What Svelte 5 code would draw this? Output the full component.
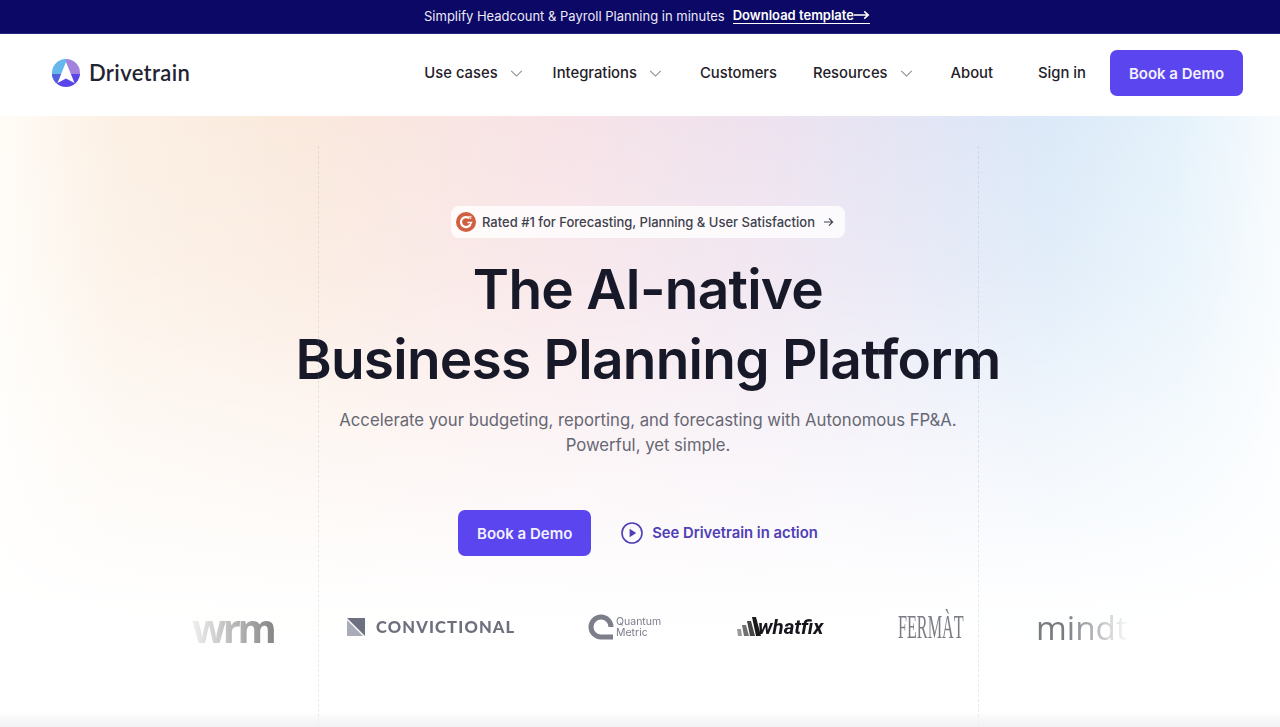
<script lang="ts">
  const navItems = [
    { label: 'Use cases', caret: true },
    { label: 'Integrations', caret: true },
    { label: 'Customers', caret: false },
    { label: 'Resources', caret: true },
    { label: 'About', caret: false }
  ];
</script>

<div class="page">
  <div class="announce">
    <span>Simplify Headcount &amp; Payroll Planning in minutes</span>
    <a href="#template">Download template<svg class="long-arrow" viewBox="0 0 18 10" aria-hidden="true"><path d="M0 5h16M11.5 1l4.5 4-4.5 4"/></svg></a>
  </div>

  <header class="nav">
    <a class="brand" href="#home">
      <svg class="mark" viewBox="0 0 28 28" aria-hidden="true">
        <defs>
          <clipPath id="disc"><circle cx="14" cy="14" r="14"/></clipPath>
        </defs>
        <g clip-path="url(#disc)">
          <rect width="14" height="17" fill="#66b8ec"/>
          <rect x="14" width="14" height="17" fill="#a183dd"/>
          <rect y="15" width="28" height="13" fill="#5a45e8"/>
          <path d="M0 15 9 15 5 24 0 24Z" fill="#4f62dc"/>
        </g>
        <path d="M14 3 22.5 24 14 19.5 5.5 24Z" fill="#fff"/>
      </svg>
      <span>Drivetrain</span>
    </a>
    <nav>
      {#each navItems as item}
        <a class="nav-link" href="#nav">
          {item.label}
          {#if item.caret}
            <svg class="caret" viewBox="0 0 14 8" aria-hidden="true"><path d="M1 1l6 6 6-6"/></svg>
          {/if}
        </a>
      {/each}
      <a class="nav-link sign-in" href="#signin">Sign in</a>
      <a class="btn nav-btn" href="#demo">Book a Demo</a>
    </nav>
  </header>

  <main class="hero">
    <span class="guide guide-left"></span>
    <span class="guide guide-right"></span>

    <a class="badge" href="#g2">
      <svg class="g2" viewBox="0 0 20 20" aria-hidden="true">
        <circle cx="10" cy="10" r="10" fill="#cf5f3e"/>
        <path d="M13.2 6.2A5 5 0 1 0 14.4 12.4" fill="none" stroke="#fff" stroke-width="2.2"/>
        <path d="M11.5 10.5h4l-2 3.4" fill="none" stroke="#fff" stroke-width="1.4"/>
        <path d="M12.6 4.4h2.6v.7l-1.4 1.4h1.4" fill="none" stroke="#fff" stroke-width=".8"/>
      </svg>
      <span>Rated #1 for Forecasting, Planning &amp; User Satisfaction</span>
      <svg class="small-arrow" viewBox="0 0 12 10" aria-hidden="true"><path d="M1 5h9.5M6.5 1l4 4-4 4"/></svg>
    </a>

    <h1>The AI-native<br />Business Planning Platform</h1>
    <p class="lede">Accelerate your budgeting, reporting, and forecasting with Autonomous FP&amp;A.<br />Powerful, yet simple.</p>

    <div class="cta">
      <a class="btn cta-btn" href="#demo">Book a Demo</a>
      <a class="watch" href="#video">
        <svg viewBox="0 0 22 22" aria-hidden="true">
          <circle cx="11" cy="11" r="10" fill="none" stroke="#4f3fb5" stroke-width="1.6"/>
          <path d="M8.6 6.8v8.4l6.6-4.2Z" fill="#4f3fb5"/>
        </svg>
        See Drivetrain in action
      </a>
    </div>

    <div class="logos">
      <span class="logo wrm">wrm</span>
      <span class="logo conv">
        <svg viewBox="0 0 18 18" aria-hidden="true">
          <path d="M0 0h18v18Z" fill="#6d7080"/>
          <path d="M0 2v16h16Z" fill="#a9abb6"/>
        </svg>
        CONVICTIONAL
      </span>
      <span class="logo quantum">
        <svg viewBox="0 0 26 26" aria-hidden="true">
          <path d="M25 23H13a10 10 0 1 1 10-10" fill="none" stroke="#7c7e8a" stroke-width="5"/>
        </svg>
        <span>Quantum<br />Metric</span>
      </span>
      <span class="logo whatfix">
        <svg viewBox="0 0 24 20" aria-hidden="true">
          <path d="M0 12h4l1 7H1Z" fill="#9a9a9a"/>
          <path d="M5 8h4l3 11H7Z" fill="#707070"/>
          <path d="M10 4h4l4 15h-5Z" fill="#444"/>
          <path d="M15 0h4l5 19h-5Z" fill="#1a1a1a"/>
        </svg>
        <span>whatfix</span>
      </span>
      <span class="logo fermat"><span>FERMÀT</span></span>
      <span class="logo mind"><span>mindtickle</span></span>
    </div>
  </main>
</div>

<style>
  :global(body) {
    margin: 0;
    background: #fff;
  }

  .page {
    height: 727px;
    display: flex;
    flex-direction: column;
    overflow: hidden;
    font-family: Inter, 'Liberation Sans', sans-serif;
    color: #1a1b2b;
  }

  a {
    color: inherit;
    text-decoration: none;
  }

  .announce {
    height: 34px;
    flex-shrink: 0;
    display: flex;
    align-items: center;
    justify-content: center;
    gap: 8px;
    padding: 0 0 2px 14px;
    box-sizing: border-box;
    background: #0b0866;
    color: #eceaf8;
    font-size: 13px;
    border-bottom: 1px solid #2a2780;
  }

  .announce a {
    display: inline-flex;
    align-items: center;
    font-weight: 600;
    color: #fff;
    border-bottom: 1px solid #fff;
    line-height: 15px;
  }

  .long-arrow {
    width: 16px;
    height: 10px;
    fill: none;
    stroke: #fff;
    stroke-width: 1.8;
  }

  .nav {
    height: 82px;
    flex-shrink: 0;
    box-sizing: border-box;
    display: flex;
    align-items: center;
    justify-content: space-between;
    padding: 0 37px 4px 52px;
    background: #fff;
  }

  .brand {
    display: flex;
    align-items: center;
    gap: 9px;
    font-family: Lato, Inter, sans-serif;
    font-size: 22px;
    font-weight: 600;
    letter-spacing: 0.35px;
    color: #1f2433;
  }

  .brand span {
    padding-bottom: 2px;
  }

  .mark {
    width: 28px;
    height: 28px;
  }

  nav {
    display: flex;
    align-items: center;
  }

  .nav-link {
    display: flex;
    align-items: center;
    gap: 12px;
    font-size: 14.8px;
    font-weight: 450;
    margin-right: 38px;
    color: #1f2029;
  }

  .nav-link:nth-child(1) {
    margin-right: 30px;
  }

  .nav-link:nth-child(3) {
    margin-right: 36px;
  }

  .caret {
    width: 13px;
    height: 7px;
    fill: none;
    stroke: #8b8c94;
    stroke-width: 1.2;
  }

  .nav-link.sign-in {
    margin: 0 24px 0 7px;
  }

  .btn {
    display: flex;
    align-items: center;
    justify-content: center;
    box-sizing: border-box;
    background: #5a45ee;
    color: #f3f1ff;
    font-weight: 600;
    font-size: 15px;
    border-radius: 7px;
  }

  .nav-btn {
    width: 133px;
    height: 46px;
  }

  .hero {
    position: relative;
    flex: 1;
    display: flex;
    flex-direction: column;
    align-items: center;
    padding-top: 90px;
    padding-left: 16px;
    background:
      linear-gradient(to bottom, rgba(255, 255, 255, 0) 0%, rgba(255, 255, 255, 0.2) 25%, rgba(255, 255, 255, 0.65) 55%, rgba(255, 255, 255, 0.98) 80%, #fff 100%),
      linear-gradient(to right, #fffcf7 0%, #fcf0e4 9%, #fae9dd 24%, #f8e3e6 42%, #eee2ef 60%, #e1e6f6 74%, #dbe9f8 82%, #e5f2fb 92%, #f7fbfe 100%);
  }

  /* soft edge of the next section */
  .hero::after {
    content: '';
    position: absolute;
    left: 0;
    right: 0;
    bottom: 0;
    height: 16px;
    background: linear-gradient(to bottom, rgba(242, 242, 244, 0), #f1f1f3);
  }

  .guide {
    position: absolute;
    top: 30px;
    bottom: 0;
    width: 0;
    border-left: 1px dashed rgba(150, 150, 170, 0.2);
  }

  .guide-left {
    left: 318px;
  }

  .guide-right {
    left: 978px;
  }

  .badge {
    display: flex;
    align-items: center;
    gap: 6px;
    height: 32px;
    box-sizing: border-box;
    padding: 0 11px 0 5px;
    border-radius: 8px;
    background: rgba(255, 255, 255, 0.8);
    font-size: 13px;
    font-weight: 450;
    color: #40414c;
  }

  .g2 {
    width: 20px;
    height: 20px;
  }

  .small-arrow {
    width: 11px;
    height: 10px;
    margin-left: 2px;
    fill: none;
    stroke: #40414c;
    stroke-width: 1.3;
  }

  h1 {
    margin: 16px 0 0;
    text-align: center;
    font-size: 55px;
    line-height: 70px;
    font-weight: 600;
    letter-spacing: -0.75px;
    color: #181928;
  }

  .lede {
    margin: 14px 0 0;
    text-align: center;
    font-size: 16.7px;
    line-height: 25px;
    color: #666773;
  }

  .cta {
    display: flex;
    align-items: center;
    gap: 30px;
    margin-top: 52px;
    padding-right: 20px;
  }

  .cta-btn {
    width: 133px;
    height: 46px;
  }

  .watch {
    display: flex;
    align-items: center;
    gap: 9px;
    font-size: 14.8px;
    font-weight: 600;
    color: #4f3fb5;
  }

  .watch svg {
    width: 22px;
    height: 22px;
  }

  .logos {
    position: absolute;
    left: 170px;
    top: 488px;
    width: 960px;
    height: 46px;
    display: flex;
    align-items: center;
    overflow: hidden;
    -webkit-mask-image: linear-gradient(to right, transparent 10px, #000 115px, #000 895px, transparent 960px);
    mask-image: linear-gradient(to right, transparent 10px, #000 115px, #000 895px, transparent 960px);
  }

  .logo {
    display: flex;
    align-items: center;
    flex-shrink: 0;
    white-space: nowrap;
    color: #767884;
  }

  .wrm {
    margin-left: 22px;
    width: 155px;
    font-family: 'Open Sans', sans-serif;
    font-size: 40px;
    font-weight: 700;
    letter-spacing: -3.5px;
    color: #777;
  }

  .conv {
    width: 241px;
    gap: 11px;
    font-family: Lato, sans-serif;
    font-size: 16.5px;
    font-weight: 900;
    letter-spacing: 1.15px;
    color: #6d6f7c;
  }

  .conv svg {
    width: 18px;
    height: 18px;
  }

  .quantum {
    width: 148px;
    gap: 2px;
    font-size: 10.5px;
    line-height: 11px;
    color: #7c7e8a;
  }

  .quantum svg {
    width: 26px;
    height: 26px;
  }

  .whatfix {
    width: 162px;
    font-family: Roboto, sans-serif;
    font-style: italic;
    font-size: 20.5px;
    font-weight: 700;
    color: #15151c;
  }

  .whatfix svg {
    width: 24px;
    height: 20px;
    margin-right: -3px;
    margin-left: 1px;
  }

  .fermat {
    width: 138px;
    font-family: 'Liberation Serif', serif;
    font-size: 33px;
    color: #7b7c85;
  }

  .fermat span {
    transform: scaleX(0.49);
    transform-origin: left;
  }

  .mind {
    font-family: 'Open Sans', sans-serif;
    font-size: 32px;
    color: #7a7a82;
  }

  .mind span {
    transform: scaleX(1.04);
    transform-origin: left;
  }
</style>
